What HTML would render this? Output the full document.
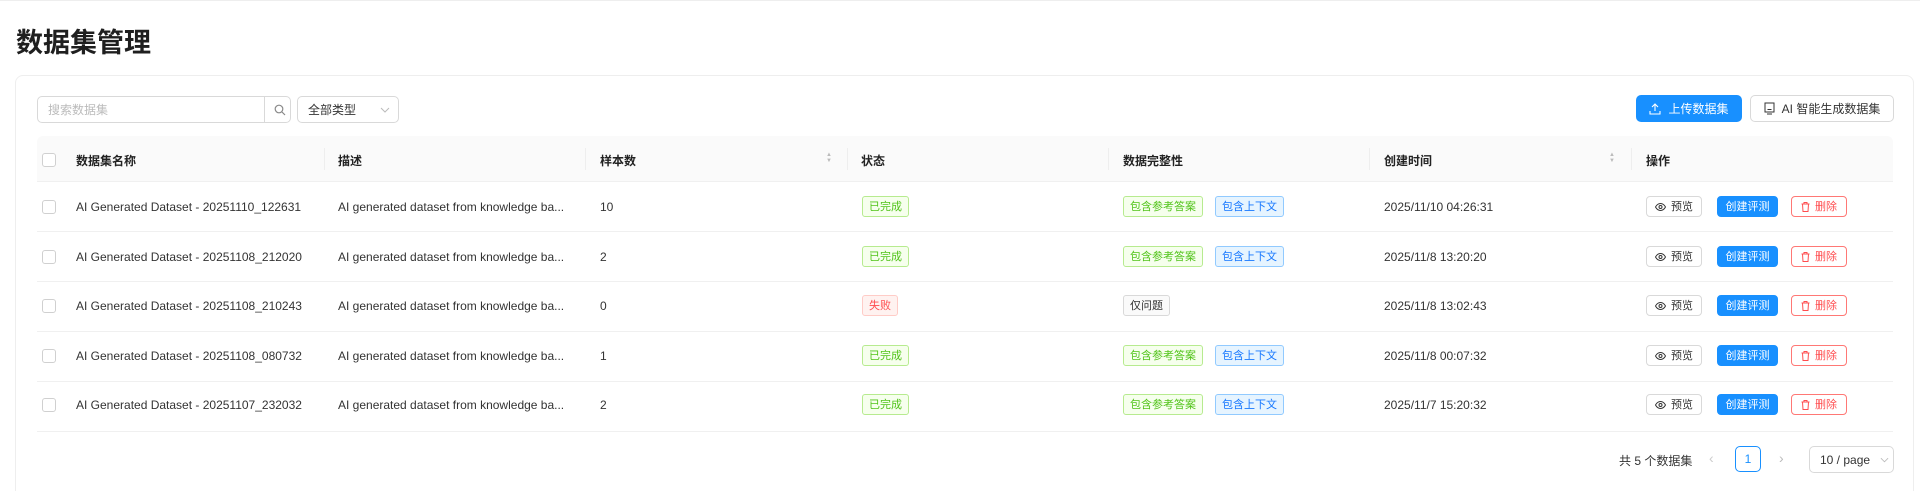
<!DOCTYPE html>
<html><head><meta charset="utf-8"><style>
*{box-sizing:border-box;margin:0;padding:0}
html{width:1920px;height:491px;overflow:hidden}
body{width:1920px;height:491px;background:#fff;font-family:"Liberation Sans","Noto Sans CJK SC",sans-serif;color:#333;font-size:12px;position:relative;overflow:hidden;border-top:1px solid #eee}
.a{position:absolute}
h1{position:absolute;left:16px;top:20px;font-size:27px;font-weight:700;color:#1f1f1f;font-family:"Noto Sans CJK SC",sans-serif}
.card{position:absolute;left:15px;top:74px;width:1899px;height:440px;border:1px solid #eee;border-radius:8px}
.inp{border:1px solid #d9d9d9;border-radius:5px;height:27px;top:95px;display:flex;align-items:center}
.btn{height:27px;top:94px;border-radius:5px;display:flex;align-items:center;justify-content:center;gap:7px;font-size:12px}
.hdr{left:37px;top:135px;width:1856px;height:46px;background:#fafafa;border-bottom:1px solid #f0f0f0;border-radius:6px 6px 0 0}
.th{top:151px;font-weight:700;color:#222}
.dv{top:147px;width:1px;height:22px;background:#eee}
.cb{width:14px;height:14px;border:1px solid #d0d0d0;border-radius:3px;background:#fff}
.row{left:37px;width:1856px;height:1px;background:#f0f0f0}
.tag{height:21px;padding:2px 6px 0;border-radius:3px;font-size:11px;border:1px solid;display:flex;align-items:center;line-height:1}
.g{color:#52c41a;background:#f6ffed;border-color:#b7eb8f}
.b{color:#1677ff;background:#e6f4ff;border-color:#91caff}
.r{color:#ff4d4f;background:#fff2f0;border-color:#ffccc7}
.n{color:#333;background:#fafafa;border-color:#d9d9d9}
.op{height:21px;padding-top:2px;border-radius:4px;font-size:11px;display:flex;align-items:center;justify-content:center;gap:5px;border:1px solid;line-height:1}
.op svg{margin-top:-2px}
.sort{width:6px;font-size:6px;line-height:6px;color:#bbb;text-align:center}
</style></head><body>
<h1>数据集管理</h1>
<div class="card"></div>
<div class="a inp" style="left:37px;width:254px"><span style="margin-left:10px;color:#bbb">搜索数据集</span><div class="a" style="left:226px;top:0;width:1px;height:25px;background:#d9d9d9"></div>
<svg class="a" style="left:236px;top:7px" width="12" height="12" viewBox="0 0 12 12" fill="none" stroke="#888" stroke-width="1.2"><circle cx="5" cy="5" r="3.8"/><path d="M8 8l3 3"/></svg></div>
<div class="a inp" style="left:297px;width:102px"><span style="margin-left:10px">全部类型</span><svg class="a" style="left:82px;top:10px" width="10" height="6" viewBox="0 0 10 6" fill="none" stroke="#bbb"><path d="M1 1l4 4 4-4"/></svg></div>
<div class="a btn" style="left:1636px;width:106px;background:#1890ff;color:#fff"><svg width="12" height="12" viewBox="0 0 12 12" fill="none" stroke="#fff" stroke-width="1.1"><path d="M6 8V1M3 4l3-3 3 3M1 8v3h10V8"/></svg>上传数据集</div>
<div class="a btn" style="left:1750px;width:144px;border:1px solid #d9d9d9;color:#333"><svg width="11" height="13" viewBox="0 0 11 13" fill="none" stroke="#333" stroke-width="1"><rect x="1" y="1" width="9" height="9"/><path d="M3 12h5M3.5 7.5h4"/></svg>AI 智能生成数据集</div>
<div class="a hdr"></div>
<div class="a cb" style="left:42px;top:152px"></div>
<div class="a th" style="left:76px">数据集名称</div>
<div class="a th" style="left:338px">描述</div>
<div class="a th" style="left:600px">样本数</div>
<div class="a th" style="left:861px">状态</div>
<div class="a th" style="left:1123px">数据完整性</div>
<div class="a th" style="left:1384px">创建时间</div>
<div class="a th" style="left:1646px">操作</div>
<div class="a dv" style="left:324px"></div><div class="a dv" style="left:585px"></div><div class="a dv" style="left:847px"></div><div class="a dv" style="left:1108px"></div><div class="a dv" style="left:1369px"></div><div class="a dv" style="left:1631px"></div>
<div class="a sort" style="left:826px;top:151px">▲<br>▼</div>
<div class="a sort" style="left:1609px;top:151px">▲<br>▼</div>

<div class="a cb" style="left:42px;top:199px"></div>
<div class="a" style="left:76px;top:199px">AI Generated Dataset - 20251110_122631</div>
<div class="a" style="left:338px;top:199px">AI generated dataset from knowledge ba...</div>
<div class="a" style="left:600px;top:199px">10</div>
<div class="a tag g" style="left:862px;top:195px">已完成</div>
<div class="a tag g" style="left:1123px;top:195px">包含参考答案</div>
<div class="a tag b" style="left:1215px;top:195px">包含上下文</div>
<div class="a" style="left:1384px;top:199px">2025/11/10 04:26:31</div>
<div class="row a" style="top:230px"></div>

<div class="a cb" style="left:42px;top:249px"></div>
<div class="a" style="left:76px;top:249px">AI Generated Dataset - 20251108_212020</div>
<div class="a" style="left:338px;top:249px">AI generated dataset from knowledge ba...</div>
<div class="a" style="left:600px;top:249px">2</div>
<div class="a tag g" style="left:862px;top:245px">已完成</div>
<div class="a tag g" style="left:1123px;top:245px">包含参考答案</div>
<div class="a tag b" style="left:1215px;top:245px">包含上下文</div>
<div class="a" style="left:1384px;top:249px">2025/11/8 13:20:20</div>
<div class="row a" style="top:280px"></div>

<div class="a cb" style="left:42px;top:298px"></div>
<div class="a" style="left:76px;top:298px">AI Generated Dataset - 20251108_210243</div>
<div class="a" style="left:338px;top:298px">AI generated dataset from knowledge ba...</div>
<div class="a" style="left:600px;top:298px">0</div>
<div class="a tag r" style="left:862px;top:294px">失败</div>
<div class="a tag n" style="left:1123px;top:294px">仅问题</div>
<div class="a" style="left:1384px;top:298px">2025/11/8 13:02:43</div>
<div class="row a" style="top:330px"></div>

<div class="a cb" style="left:42px;top:348px"></div>
<div class="a" style="left:76px;top:348px">AI Generated Dataset - 20251108_080732</div>
<div class="a" style="left:338px;top:348px">AI generated dataset from knowledge ba...</div>
<div class="a" style="left:600px;top:348px">1</div>
<div class="a tag g" style="left:862px;top:344px">已完成</div>
<div class="a tag g" style="left:1123px;top:344px">包含参考答案</div>
<div class="a tag b" style="left:1215px;top:344px">包含上下文</div>
<div class="a" style="left:1384px;top:348px">2025/11/8 00:07:32</div>
<div class="row a" style="top:380px"></div>

<div class="a cb" style="left:42px;top:397px"></div>
<div class="a" style="left:76px;top:397px">AI Generated Dataset - 20251107_232032</div>
<div class="a" style="left:338px;top:397px">AI generated dataset from knowledge ba...</div>
<div class="a" style="left:600px;top:397px">2</div>
<div class="a tag g" style="left:862px;top:393px">已完成</div>
<div class="a tag g" style="left:1123px;top:393px">包含参考答案</div>
<div class="a tag b" style="left:1215px;top:393px">包含上下文</div>
<div class="a" style="left:1384px;top:397px">2025/11/7 15:20:32</div>
<div class="row a" style="top:430px"></div>

<div style="position:absolute;left:0;top:0">
<div class="a op" style="left:1646px;top:195px;width:56px;border-color:#d9d9d9"><svg width="11" height="8" viewBox="0 0 11 8" fill="none" stroke="#333"><path d="M.5 4C2 1.3 3.5.5 5.5.5S9 1.3 10.5 4C9 6.7 7.5 7.5 5.5 7.5S2 6.7.5 4z"/><circle cx="5.5" cy="4" r="1.5"/></svg>预览</div>
<div class="a op" style="left:1717px;top:195px;width:61px;background:#1890ff;border-color:#1890ff;color:#fff">创建评测</div>
<div class="a op" style="left:1791px;top:195px;width:56px;border-color:#ff7875;color:#ff4d4f"><svg width="9" height="10" viewBox="0 0 9 10" fill="none" stroke="#ff4d4f"><path d="M.5 2h8M3 2V.5h3V2M1.5 2l.5 7.5h5l.5-7.5"/></svg>删除</div>
</div>
<div style="position:absolute;left:0;top:50px">
<div class="a op" style="left:1646px;top:195px;width:56px;border-color:#d9d9d9"><svg width="11" height="8" viewBox="0 0 11 8" fill="none" stroke="#333"><path d="M.5 4C2 1.3 3.5.5 5.5.5S9 1.3 10.5 4C9 6.7 7.5 7.5 5.5 7.5S2 6.7.5 4z"/><circle cx="5.5" cy="4" r="1.5"/></svg>预览</div>
<div class="a op" style="left:1717px;top:195px;width:61px;background:#1890ff;border-color:#1890ff;color:#fff">创建评测</div>
<div class="a op" style="left:1791px;top:195px;width:56px;border-color:#ff7875;color:#ff4d4f"><svg width="9" height="10" viewBox="0 0 9 10" fill="none" stroke="#ff4d4f"><path d="M.5 2h8M3 2V.5h3V2M1.5 2l.5 7.5h5l.5-7.5"/></svg>删除</div>
</div>
<div style="position:absolute;left:0;top:99px">
<div class="a op" style="left:1646px;top:195px;width:56px;border-color:#d9d9d9"><svg width="11" height="8" viewBox="0 0 11 8" fill="none" stroke="#333"><path d="M.5 4C2 1.3 3.5.5 5.5.5S9 1.3 10.5 4C9 6.7 7.5 7.5 5.5 7.5S2 6.7.5 4z"/><circle cx="5.5" cy="4" r="1.5"/></svg>预览</div>
<div class="a op" style="left:1717px;top:195px;width:61px;background:#1890ff;border-color:#1890ff;color:#fff">创建评测</div>
<div class="a op" style="left:1791px;top:195px;width:56px;border-color:#ff7875;color:#ff4d4f"><svg width="9" height="10" viewBox="0 0 9 10" fill="none" stroke="#ff4d4f"><path d="M.5 2h8M3 2V.5h3V2M1.5 2l.5 7.5h5l.5-7.5"/></svg>删除</div>
</div>
<div style="position:absolute;left:0;top:149px">
<div class="a op" style="left:1646px;top:195px;width:56px;border-color:#d9d9d9"><svg width="11" height="8" viewBox="0 0 11 8" fill="none" stroke="#333"><path d="M.5 4C2 1.3 3.5.5 5.5.5S9 1.3 10.5 4C9 6.7 7.5 7.5 5.5 7.5S2 6.7.5 4z"/><circle cx="5.5" cy="4" r="1.5"/></svg>预览</div>
<div class="a op" style="left:1717px;top:195px;width:61px;background:#1890ff;border-color:#1890ff;color:#fff">创建评测</div>
<div class="a op" style="left:1791px;top:195px;width:56px;border-color:#ff7875;color:#ff4d4f"><svg width="9" height="10" viewBox="0 0 9 10" fill="none" stroke="#ff4d4f"><path d="M.5 2h8M3 2V.5h3V2M1.5 2l.5 7.5h5l.5-7.5"/></svg>删除</div>
</div>
<div style="position:absolute;left:0;top:198px">
<div class="a op" style="left:1646px;top:195px;width:56px;border-color:#d9d9d9"><svg width="11" height="8" viewBox="0 0 11 8" fill="none" stroke="#333"><path d="M.5 4C2 1.3 3.5.5 5.5.5S9 1.3 10.5 4C9 6.7 7.5 7.5 5.5 7.5S2 6.7.5 4z"/><circle cx="5.5" cy="4" r="1.5"/></svg>预览</div>
<div class="a op" style="left:1717px;top:195px;width:61px;background:#1890ff;border-color:#1890ff;color:#fff">创建评测</div>
<div class="a op" style="left:1791px;top:195px;width:56px;border-color:#ff7875;color:#ff4d4f"><svg width="9" height="10" viewBox="0 0 9 10" fill="none" stroke="#ff4d4f"><path d="M.5 2h8M3 2V.5h3V2M1.5 2l.5 7.5h5l.5-7.5"/></svg>删除</div>
</div>

<div class="a" style="left:1619px;top:451px">共 5 个数据集</div>
<div class="a" style="left:1709px;top:449px;color:#ccc;font-size:14px">‹</div>
<div class="a" style="left:1735px;top:445px;width:26px;height:26px;border:1px solid #1890ff;border-radius:5px;color:#1890ff;text-align:center;line-height:24px">1</div>
<div class="a" style="left:1779px;top:449px;color:#bbb;font-size:14px">›</div>
<div class="a inp" style="left:1809px;top:445px;width:85px;height:27px"><span style="margin-left:10px">10 / page</span><svg class="a" style="left:70px;top:10px" width="9" height="6" viewBox="0 0 10 6" fill="none" stroke="#bbb"><path d="M1 1l4 4 4-4"/></svg></div>
</body></html>
